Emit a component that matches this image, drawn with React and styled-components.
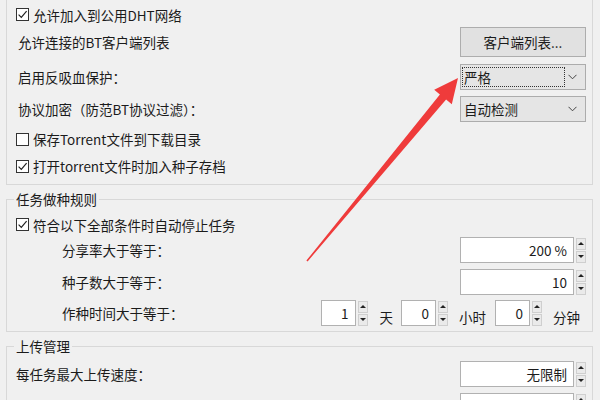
import React from 'react';
import styled, { createGlobalStyle } from 'styled-components';

const GlobalStyle = createGlobalStyle`
  html, body {
    margin: 0;
    padding: 0;
    background: #f0f0f0;
  }
  body {
    font-family: "Noto Sans CJK SC", "Noto Sans", sans-serif;
    font-size: 13.5px;
    color: #1b1b1b;
  }
`;

const Page = styled.div`
  position: relative;
  width: 600px;
  height: 400px;
  overflow: hidden;
  background: #f0f0f0;
  box-sizing: border-box;
  padding: 0 7px 0 6px;
`;

const Group = styled.fieldset`
  margin: ${props => props.$mt || 0}px 0 0 0;
  padding: 0;
  min-inline-size: 0;
  border: 1px solid #d8d8d8;
  border-top: ${props => (props.$cut ? 'none' : '1px solid #d8d8d8')};
`;

const Legend = styled.legend`
  margin-left: 7px;
  padding: 0 2px;
  line-height: 18px;
  height: 18px;
`;

const Body = styled.div`
  padding: 0 6px ${props => props.$pb || 5}px 9px;
`;

const Row = styled.div`
  display: flex;
  align-items: center;
  height: ${props => props.$h || 26}px;
  margin-top: ${props => props.$mt || 0}px;
  line-height: 18px;
`;

const Label = styled.span`
  padding-left: ${props => props.$indent || 0}px;
  white-space: nowrap;
`;

const CheckLabel = styled.label`
  display: flex;
  align-items: center;
  gap: 4px;
  white-space: nowrap;
`;

const Box = styled.span`
  width: 13px;
  height: 13px;
  box-sizing: border-box;
  border: 1px solid #333;
  background: #fff;
  display: flex;
  align-items: center;
  justify-content: center;
`;

const Right = styled.div`
  margin-left: auto;
  display: flex;
  align-items: center;
`;

const Button = styled.button`
  width: 126px;
  height: 30px;
  background: #e1e1e1;
  border: 1px solid #adadad;
  font: inherit;
  color: inherit;
  padding: 0;
  line-height: 18px;
`;

const Select = styled.div`
  width: 126px;
  height: 26px;
  box-sizing: border-box;
  background: #e5e5e5;
  border: 1px solid #acacac;
  padding: 2px 0 2px 1px;
  display: flex;
`;

const SelectText = styled.span`
  flex: 1;
  display: flex;
  align-items: center;
  padding-left: 1px;
  border: 1px ${props => (props.$focused ? 'dotted #333' : 'solid transparent')};
`;

const Chevron = styled.span`
  width: 20px;
  display: flex;
  align-items: center;
  padding-left: 3px;
  box-sizing: border-box;
`;

const Spin = styled.div`
  display: flex;
  align-items: center;
  gap: 2px;
`;

const SpinField = styled.div`
  width: ${props => props.$w}px;
  height: 26px;
  box-sizing: border-box;
  border: 1px solid #b1b1b1;
  background: #fff;
  display: flex;
  align-items: center;
  justify-content: flex-end;
  padding-right: 6px;
`;

const SpinArrows = styled.div`
  width: 10px;
  height: 25px;
  display: flex;
  flex-direction: column;
  gap: 1px;
`;

const ArrowBtn = styled.span`
  flex: 1;
  background: #eaeaea;
  border: 1px solid #cfcfcf;
  display: flex;
  align-items: center;
  justify-content: center;

  &::after {
    content: '';
    border-left: 3px solid transparent;
    border-right: 3px solid transparent;
    ${props => (props.$down ? 'border-top: 3px solid #222;' : 'border-bottom: 3px solid #222;')}
  }
`;

const Unit = styled.span`
  margin: 8px ${props => props.$mr || 0}px 0 ${props => props.$ml || 0}px;
  white-space: nowrap;
`;

const Overlay = styled.svg`
  position: absolute;
  left: 0;
  top: 0;
  pointer-events: none;
`;

function Check({ checked, children }) {
  return (
    <CheckLabel>
      <Box>
        {checked && (
          <svg width="11" height="11" viewBox="0 0 11 11">
            <path d="M1.6 5.6 L4.3 8.4 L9.6 2.2" fill="none" stroke="#222" strokeWidth="1.2" />
          </svg>
        )}
      </Box>
      {children}
    </CheckLabel>
  );
}

function Dropdown({ value, focused }) {
  return (
    <Select>
      <SelectText $focused={focused}>{value}</SelectText>
      <Chevron>
        <svg width="9" height="6" viewBox="0 0 9 6">
          <path d="M0.5 0.8 L4.5 4.8 L8.5 0.8" fill="none" stroke="#444" strokeWidth="1" />
        </svg>
      </Chevron>
    </Select>
  );
}

function Spinner({ value, width }) {
  return (
    <Spin>
      <SpinField $w={width}>{value}</SpinField>
      <SpinArrows>
        <ArrowBtn />
        <ArrowBtn $down />
      </SpinArrows>
    </Spin>
  );
}

function App() {
  return (
    <>
      <GlobalStyle />
      <Page>
        <Group $cut>
          <Body>
            <Row $mt={2} $h={25}>
              <Check checked>允许加入到公用DHT网络</Check>
            </Row>
            <Row $h={30}>
              <Label $indent={2}>允许连接的BT客户端列表</Label>
              <Right>
                <Button>客户端列表...</Button>
              </Right>
            </Row>
            <Row $mt={7}>
              <Label $indent={2}>启用反吸血保护：</Label>
              <Right>
                <Dropdown value="严格" focused />
              </Right>
            </Row>
            <Row $mt={6}>
              <Label $indent={2}>协议加密（防范BT协议过滤）：</Label>
              <Right>
                <Dropdown value="自动检测" />
              </Right>
            </Row>
            <Row $mt={4}>
              <Check>保存Torrent文件到下载目录</Check>
            </Row>
            <Row $mt={1}>
              <Check checked>打开torrent文件时加入种子存档</Check>
            </Row>
          </Body>
        </Group>

        <Group $mt={5}>
          <Legend>任务做种规则</Legend>
          <Body>
            <Row $mt={4} $h={25}>
              <Check checked>符合以下全部条件时自动停止任务</Check>
            </Row>
            <Row>
              <Label $indent={46}>分享率大于等于：</Label>
              <Right>
                <Spinner value="200 %" width={114} />
              </Right>
            </Row>
            <Row $mt={6}>
              <Label $indent={46}>种子数大于等于：</Label>
              <Right>
                <Spinner value="10" width={114} />
              </Right>
            </Row>
            <Row $mt={5}>
              <Label $indent={46}>作种时间大于等于：</Label>
              <Right>
                <Spinner value="1" width={35} />
                <Unit $ml={12} $mr={8}>天</Unit>
                <Spinner value="0" width={35} />
                <Unit $ml={11} $mr={9}>小时</Unit>
                <Spinner value="0" width={35} />
                <Unit $ml={11} $mr={6}>分钟</Unit>
              </Right>
            </Row>
          </Body>
        </Group>

        <Group $mt={5}>
          <Legend>上传管理</Legend>
          <Body>
            <Row $mt={6}>
              <Label>每任务最大上传速度：</Label>
              <Right>
                <Spinner value="无限制" width={114} />
              </Right>
            </Row>
            <Row $mt={6}>
              <Right>
                <Spinner value="无限制" width={114} />
              </Right>
            </Row>
          </Body>
        </Group>

        <Overlay width="600" height="400" viewBox="0 0 600 400">
          <polygon
            fill="#ef3b3b"
            points="306.4,260.6 307.6,261.4 446.1,99.6 451.8,104.3 458,78 434.2,89.7 439.9,94.4"
          />
        </Overlay>
      </Page>
    </>
  );
}

export default App;
